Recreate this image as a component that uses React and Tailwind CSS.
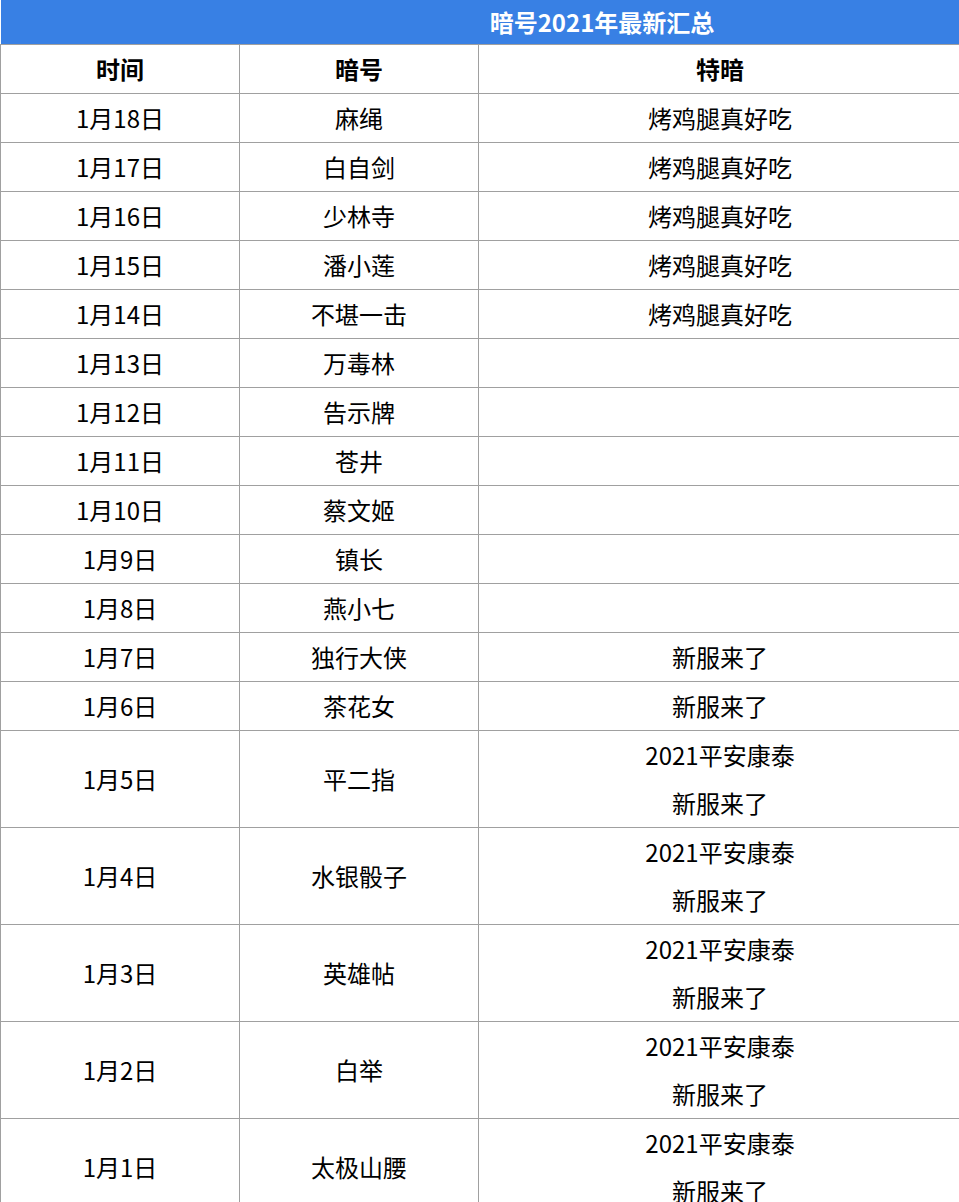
const rows = [
  ["1月18日", "麻绳", ["烤鸡腿真好吃"]],
  ["1月17日", "白自剑", ["烤鸡腿真好吃"]],
  ["1月16日", "少林寺", ["烤鸡腿真好吃"]],
  ["1月15日", "潘小莲", ["烤鸡腿真好吃"]],
  ["1月14日", "不堪一击", ["烤鸡腿真好吃"]],
  ["1月13日", "万毒林", []],
  ["1月12日", "告示牌", []],
  ["1月11日", "苍井", []],
  ["1月10日", "蔡文姬", []],
  ["1月9日", "镇长", []],
  ["1月8日", "燕小七", []],
  ["1月7日", "独行大侠", ["新服来了"]],
  ["1月6日", "茶花女", ["新服来了"]],
  ["1月5日", "平二指", ["2021平安康泰", "新服来了"]],
  ["1月4日", "水银骰子", ["2021平安康泰", "新服来了"]],
  ["1月3日", "英雄帖", ["2021平安康泰", "新服来了"]],
  ["1月2日", "白举", ["2021平安康泰", "新服来了"]],
  ["1月1日", "太极山腰", ["2021平安康泰", "新服来了"]],
];

const cell = "border border-[#a0a0a0] text-center align-middle p-0";

export default function App() {
  return (
    <div
      className="w-[959px] overflow-hidden bg-white text-black text-[24px] leading-[48px]"
      style={{ fontFamily: '"Noto Sans CJK SC", "Noto Sans", sans-serif' }}
    >
      <table className="table-fixed border-collapse w-[961px]">
        <colgroup>
          <col className="w-[239px]" />
          <col className="w-[239px]" />
          <col className="w-[483px]" />
        </colgroup>
        <thead>
          <tr>
            <th
              colSpan={3}
              className="bg-[#3880e4] text-white font-bold h-[44px] leading-[44px] pl-[242px] text-center border-b border-[#a0a0a0] p-0"
            >
              暗号2021年最新汇总
            </th>
          </tr>
          <tr>
            <th className={`${cell} font-bold h-[49px]`}>时间</th>
            <th className={`${cell} font-bold`}>暗号</th>
            <th className={`${cell} font-bold`}>特暗</th>
          </tr>
        </thead>
        <tbody>
          {rows.map(([date, code, extra]) => (
            <tr key={date}>
              <td className={`${cell} ${extra.length > 1 ? "h-[97px]" : "h-[49px]"}`}>{date}</td>
              <td className={cell}>{code}</td>
              <td className={cell}>
                {extra.map((t) => (
                  <div key={t}>{t}</div>
                ))}
              </td>
            </tr>
          ))}
        </tbody>
      </table>
    </div>
  );
}
